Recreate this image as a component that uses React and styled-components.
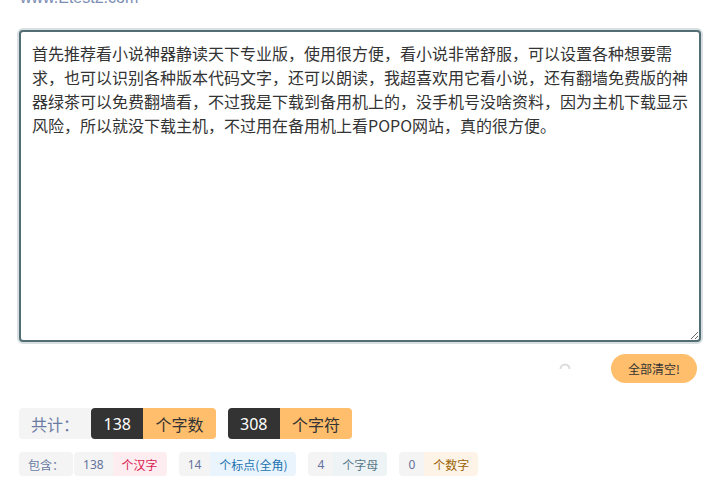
import React, { useEffect, useRef } from "react";
import styled, { createGlobalStyle } from "styled-components";

const Global = createGlobalStyle`
  html, body { margin: 0; padding: 0; background: #fff; overflow: hidden; }
  body { font-family: "Noto Sans CJK SC", "Liberation Sans", sans-serif; }
`;

const Page = styled.div`
  padding: 0 9px 0 19px;
  width: 710px;
  box-sizing: border-box;
`;

const Site = styled.div`
  margin-top: -12px;
  margin-left: 1px;
  height: 20px;
  line-height: 20px;
  font-family: "Liberation Sans", Arial, sans-serif;
  font-size: 16px;
  color: #7b8db3;
`;

const Editor = styled.textarea`
  display: block;
  margin-top: 22px;
  width: 100%;
  height: 312px;
  box-sizing: border-box;
  padding: 9px 11px;
  border: 2px solid #536d75;
  border-radius: 4px;
  box-shadow: 0 0 0 2px #d9e0e2;
  font-family: "Noto Sans CJK SC", "Microsoft YaHei", sans-serif;
  font-size: 16px;
  line-height: 24px;
  color: #333;
  outline: none;
  background: #fff;
  caret-color: #333;
`;

const Actions = styled.div`
  display: flex;
  justify-content: flex-end;
  align-items: center;
  gap: 39px;
  margin-top: 12px;
  padding-right: 4px;
`;

const Spinner = styled.svg`
  display: block;
  width: 14px;
  height: 14px;
`;

const ClearButton = styled.button`
  width: 86px;
  height: 29px;
  border: none;
  border-radius: 15px;
  background: #ffbe6b;
  color: #333;
  font-family: "Noto Sans CJK SC", sans-serif;
  font-size: 12px;
  padding: 0;
  cursor: pointer;
`;

const TotalRow = styled.div`
  display: flex;
  align-items: stretch;
  margin-top: 25px;
  height: 31px;
`;

const Label = styled.div`
  display: flex;
  align-items: center;
  padding: 0 ${(p) => (p.$small ? "9px" : "12px")};
  background: #f4f4f5;
  color: #6a7ba3;
  font-size: ${(p) => (p.$small ? "12px" : "16px")};
  border-radius: ${(p) => (p.$small ? "4px" : "4px 0 0 4px")};
  margin-right: ${(p) => (p.$small ? "1px" : "0")};
`;

const Group = styled.div`
  display: flex;
  border-radius: 4px;
  overflow: hidden;
  margin-right: 12px;
`;

const Num = styled.div`
  display: flex;
  align-items: center;
  padding: 0 12.5px;
  background: #333;
  color: #fff;
  font-family: "Noto Sans", "Liberation Sans", sans-serif;
  font-size: 16px;
`;

const Unit = styled.div`
  display: flex;
  align-items: center;
  padding: 0 12px;
  background: #ffbe6b;
  color: #333;
  font-size: 16px;
`;

const DetailRow = styled.div`
  display: flex;
  align-items: stretch;
  margin-top: 13px;
  height: 24px;
`;

const SmallNum = styled.div`
  display: flex;
  align-items: center;
  padding: 0 9px;
  background: #f4f4f5;
  color: #64739b;
  font-family: "Noto Sans", "Liberation Sans", sans-serif;
  font-size: 12px;
`;

const SmallUnit = styled.div`
  display: flex;
  align-items: center;
  padding: 0 9px;
  background: ${(p) => p.$bg};
  color: ${(p) => p.$fg};
  font-size: 12px;
`;

const TEXT =
  "首先推荐看小说神器静读天下专业版，使用很方便，看小说非常舒服，可以设置各种想要需求，也可以识别各种版本代码文字，还可以朗读，我超喜欢用它看小说，还有翻墙免费版的神器绿茶可以免费翻墙看，不过我是下载到备用机上的，没手机号没啥资料，因为主机下载显示风险，所以就没下载主机，不过用在备用机上看POPO网站，真的很方便。";

const details = [
  { n: "138", u: "个汉字", bg: "#fdedf1", fg: "#d81b4f" },
  { n: "14", u: "个标点(全角)", bg: "#eaf4fc", fg: "#2273b1" },
  { n: "4", u: "个字母", bg: "#eef3f5", fg: "#57788a" },
  { n: "0", u: "个数字", bg: "#fdf4e7", fg: "#9c6206" },
];

export default function App() {
  const ref = useRef(null);
  useEffect(() => {
    const el = ref.current;
    if (el) {
      el.focus();
      el.setSelectionRange(el.value.length, el.value.length);
    }
  }, []);
  return (
    <Page>
      <Global />
      <Site>www.Etest2.com</Site>
      <Editor ref={ref} defaultValue={TEXT} spellCheck={false} />
      <Actions>
        <Spinner viewBox="0 0 14 14">
          <path d="M2.5 7 A4.5 4.5 0 0 1 11.5 7" fill="none" stroke="#dcdcdc" strokeWidth="2" />
        </Spinner>
        <ClearButton>全部清空!</ClearButton>
      </Actions>
      <TotalRow>
        <Label>共计：</Label>
        <Group>
          <Num>138</Num>
          <Unit>个字数</Unit>
        </Group>
        <Group>
          <Num>308</Num>
          <Unit>个字符</Unit>
        </Group>
      </TotalRow>
      <DetailRow>
        <Label $small>包含：</Label>
        {details.map((d) => (
          <Group key={d.u}>
            <SmallNum>{d.n}</SmallNum>
            <SmallUnit $bg={d.bg} $fg={d.fg}>{d.u}</SmallUnit>
          </Group>
        ))}
      </DetailRow>
    </Page>
  );
}
